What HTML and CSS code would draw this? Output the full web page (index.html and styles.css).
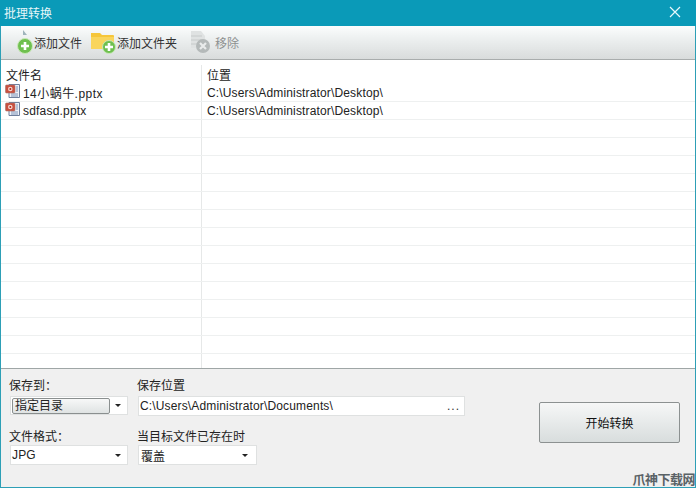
FILE: index.html
```html
<!DOCTYPE html>
<html lang="zh">
<head>
<meta charset="utf-8">
<title>批理转换</title>
<link rel="stylesheet" href="styles.css">
</head>
<body>
<div class="window">
  <header class="titlebar">
    <span class="title">批理转换</span>
    <svg class="close" width="12" height="12" viewBox="0 0 12 12"><path d="M1 1l10 10M11 1L1 11" stroke="#e8f8fb" stroke-width="1.2" fill="none"/></svg>
  </header>
  <div class="toolbar">
    <div class="tool tool-file">
      <svg width="18" height="24" viewBox="0 0 18 24"><path d="M7 0l4 5H7z" fill="#9fb4bb"/><circle cx="9" cy="16" r="7.5" fill="#6fc04f"/><circle cx="9" cy="16" r="7.5" fill="none" stroke="#c9e8b8"/><path d="M5 16h8M9 12v8" stroke="#fff" stroke-width="2.6"/></svg>
      <span>添加文件</span>
    </div>
    <div class="tool tool-folder">
      <svg width="25" height="23" viewBox="0 0 25 23"><path d="M0 2h9l2 2h11a1 1 0 0 1 1 1v13H0z" fill="#f6c63a"/><path d="M0 6h23v12H0z" fill="#f9d55c"/><circle cx="18" cy="16" r="6.5" fill="#6fc04f" stroke="#c9e8b8"/><path d="M14 16h8M18 12v8" stroke="#fff" stroke-width="2.6"/></svg>
      <span>添加文件夹</span>
    </div>
    <div class="tool tool-remove">
      <svg width="25" height="24" viewBox="0 0 25 24"><path d="M3 1h10l4 5v12H3z" fill="#dfe2e2"/><path d="M3 6h11M3 10h11M3 14h8" stroke="#c6caca"/><circle cx="15" cy="16" r="7" fill="#b4b9b9"/><path d="M12 13l6 6M18 13l-6 6" stroke="#e9ebeb" stroke-width="2.2"/></svg>
      <span>移除</span>
    </div>
  </div>
  <div class="list">
    <div class="row head"><div class="cell name">文件名</div><div class="cell">位置</div></div>
    <div class="row">
      <div class="cell name">
        <svg class="fileicon" width="16" height="16" viewBox="0 0 16 16"><path d="M4 1.500h10.500v13H4z" fill="#eef1f7" stroke="#6f7f9c"/><path d="M11 4h2M11 6h2M11 8h2M6 11h7M6 13h7" stroke="#7d93b8"/><rect x="0.500" y="2" width="9.500" height="8" rx="1" fill="#c9503f" stroke="#a8706a" stroke-width="0.600"/><circle cx="5.300" cy="6" r="2.300" fill="#f4d6cf"/><circle cx="5.300" cy="6" r="1" fill="#b8261a"/></svg>
        <span class="latin">14小蜗牛.pptx</span>
      </div>
      <div class="cell path">C:\Users\Administrator\Desktop\</div>
    </div>
    <div class="row">
      <div class="cell name">
        <svg class="fileicon" width="16" height="16" viewBox="0 0 16 16"><path d="M4 1.500h10.500v13H4z" fill="#eef1f7" stroke="#6f7f9c"/><path d="M11 4h2M11 6h2M11 8h2M6 11h7M6 13h7" stroke="#7d93b8"/><rect x="0.500" y="2" width="9.500" height="8" rx="1" fill="#c9503f" stroke="#a8706a" stroke-width="0.600"/><circle cx="5.300" cy="6" r="2.300" fill="#f4d6cf"/><circle cx="5.300" cy="6" r="1" fill="#b8261a"/></svg>
        <span class="latin tight-name">sdfasd.pptx</span>
      </div>
      <div class="cell path">C:\Users\Administrator\Desktop\</div>
    </div>
    <div class="row"><div class="cell name"></div><div class="cell"></div></div>
    <div class="row"><div class="cell name"></div><div class="cell"></div></div>
    <div class="row"><div class="cell name"></div><div class="cell"></div></div>
    <div class="row"><div class="cell name"></div><div class="cell"></div></div>
    <div class="row"><div class="cell name"></div><div class="cell"></div></div>
    <div class="row"><div class="cell name"></div><div class="cell"></div></div>
    <div class="row"><div class="cell name"></div><div class="cell"></div></div>
    <div class="row"><div class="cell name"></div><div class="cell"></div></div>
    <div class="row"><div class="cell name"></div><div class="cell"></div></div>
    <div class="row"><div class="cell name"></div><div class="cell"></div></div>
    <div class="row"><div class="cell name"></div><div class="cell"></div></div>
    <div class="row"><div class="cell name"></div><div class="cell"></div></div>
    <div class="row"><div class="cell name"></div><div class="cell"></div></div>
    <div class="filler"><div class="cell name"></div><div class="cell"></div></div>
  </div>
  <div class="panel">
    <div class="form">
      <div class="field col-a">
        <label>保存到：</label>
        <div class="select first"><span class="inner-btn">指定目录</span><i class="caret"></i></div>
      </div>
      <div class="field col-b">
        <label>保存位置</label>
        <div class="select wide"><span class="path">C:\Users\Administrator\Documents\</span><span class="dots">...</span></div>
      </div>
      <div class="field col-a tight">
        <label>文件格式：</label>
        <div class="select"><span class="path">JPG</span><i class="caret"></i></div>
      </div>
      <div class="field col-b tight">
        <label>当目标文件已存在时</label>
        <div class="select short"><span>覆盖</span><i class="caret"></i></div>
      </div>
    </div>
    <button class="start" type="button">开始转换</button>
  </div>
  <div class="watermark">爪神下载网</div>
</div>
</body>
</html>
```

FILE: styles.css
```css
* { box-sizing: border-box; }
html, body { margin: 0; padding: 0; }
body {
  width: 696px;
  height: 488px;
  overflow: hidden;
  font-family: "Liberation Sans", "Noto Sans CJK SC", sans-serif;
  font-size: 12px;
  color: #222;
}
.window {
  position: relative;
  width: 696px;
  height: 488px;
  display: flex;
  flex-direction: column;
  background: #f0f0f0;
  border: 1px solid #2d9fb6;
  border-top: 0;
}
.titlebar {
  height: 26px;
  margin: 0 -1px;
  padding: 0 15px 2px 4px;
  display: flex;
  align-items: center;
  justify-content: space-between;
  background: #0a9ab8;
  color: #e6f6f9;
}
.toolbar {
  height: 34px;
  padding: 0 0 1px 15px;
  display: flex;
  align-items: center;
  background: linear-gradient(#fbfdfd 0%, #eef1f1 35%, #d9dcdc 100%);
  border-bottom: 1px solid #a9adad;
  color: #333;
}
.tool { display: flex; align-items: center; }
.tool-file { width: 75px; gap: 0; }
.tool-folder { width: 97px; gap: 1px; }
.tool-remove { gap: 2px; color: #8d9090; }
.list {
  height: 308px;
  display: flex;
  flex-direction: column;
  background: #fff;
}
.row { height: 18px; display: flex; border-bottom: 1px solid #eef0f0; flex: none; }
.row.head { height: 24px; padding-top: 5px; border-bottom: 0; }
.filler { flex: 1; display: flex; }
.cell { flex: 1; padding-left: 5px; display: flex; align-items: center; white-space: nowrap; }
.cell.name { flex: none; width: 201px; border-right: 1px solid #e6e8e8; gap: 2px; padding-left: 4px; }
.head .cell.name { padding-left: 5px; }
.fileicon { flex: none; margin-top: -4px; }
.path { letter-spacing: 0.15px; }
.latin { letter-spacing: 0.45px; }
.latin.tight-name { letter-spacing: 0.2px; }
.panel {
  flex: 1;
  display: flex;
  align-items: flex-start;
  border-top: 1px solid #9fa6a6;
  padding: 9px 15px 0 8px;
  justify-content: space-between;
  background: #f0f0f0;
}
.form {
  display: grid;
  grid-template-columns: 127px 328px;
  row-gap: 13px;
}
.field { display: flex; flex-direction: column; gap: 2px; }
.field.tight { gap: 0; }
.field label { height: 16px; line-height: 16px; color: #222; }
.col-b label { margin-left: 1px; }
.select {
  width: 118px;
  height: 20px;
  margin-left: 1px;
  padding: 0 6px 0 1px;
  background: #fff;
  border: 1px solid #dfe1e1;
  display: flex;
  align-items: center;
  justify-content: space-between;
}
.select.first { height: 19px; }
.select.wide { width: 327px; margin-left: 2px; padding-right: 4px; }
.select.short { width: 119px; margin-left: 2px; padding-right: 8px; padding-left: 2px; }
.inner-btn {
  width: 98px;
  height: 16px;
  line-height: 15px;
  padding-left: 2px;
  border: 1px solid #8a8f8f;
  border-radius: 2px;
  background: linear-gradient(#f7f8f8, #dfe3e3);
}
.caret {
  width: 0;
  height: 0;
  border-left: 3px solid transparent;
  border-right: 3px solid transparent;
  border-top: 3px solid #222;
}
.dots { letter-spacing: 1px; color: #333; }
.start {
  width: 141px;
  height: 41px;
  margin-top: 24px;
  border: 1px solid #8c9191;
  border-radius: 2px;
  background: linear-gradient(#f6f7f7, #d8dddd);
  font: inherit;
  color: #111;
}
.watermark {
  position: absolute;
  right: 0;
  bottom: 0;
  font-size: 13px;
  font-weight: 700;
  line-height: 15px;
  color: #5a6266;
  letter-spacing: -0.5px;
}
```
